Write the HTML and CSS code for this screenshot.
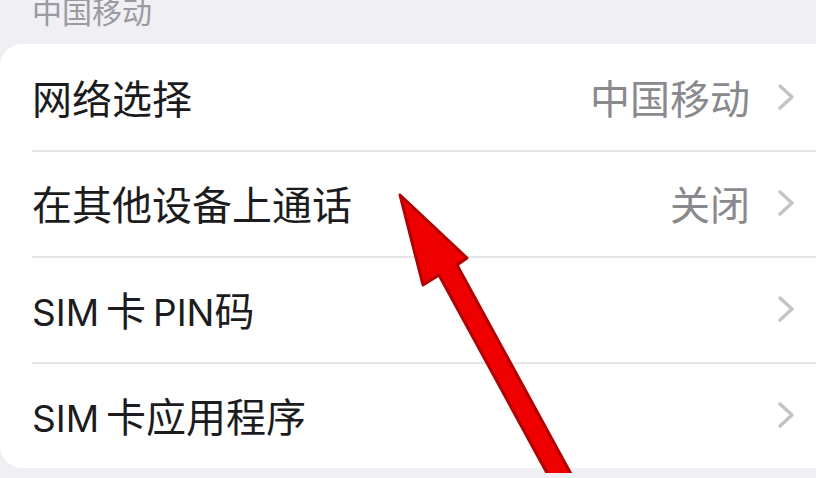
FILE: index.html
```html
<!DOCTYPE html>
<html lang="zh-CN">
<head>
<meta charset="utf-8">
<link rel="stylesheet" href="styles.css">
</head>
<body>
<div class="page">
  <div class="section-title">中国移动</div>
  <div class="card">
    <div class="row">
      <span class="label">网络选择</span>
      <span class="right"><span class="value">中国移动</span><svg class="chev" viewBox="0 0 18 28"><path d="M3 3 L15 14 L3 25" /></svg></span>
    </div>
    <div class="row">
      <span class="label">在其他设备上通话</span>
      <span class="right"><span class="value">关闭</span><svg class="chev" viewBox="0 0 18 28"><path d="M3 3 L15 14 L3 25" /></svg></span>
    </div>
    <div class="row">
      <span class="label"><span class="lat">SIM</span> 卡 <span class="lat">PIN</span>码</span>
      <span class="right"><svg class="chev" viewBox="0 0 18 28"><path d="M3 3 L15 14 L3 25" /></svg></span>
    </div>
    <div class="row">
      <span class="label"><span class="lat">SIM</span> 卡应用程序</span>
      <span class="right"><svg class="chev" viewBox="0 0 18 28"><path d="M3 3 L15 14 L3 25" /></svg></span>
    </div>
  </div>
  <svg class="arrow" viewBox="0 0 816 478" width="816" height="478">
    <polygon points="400,200 467,263 457,270 577,490 559,500 439,280 423,290" />
  </svg>
</div>
</body>
</html>
```

FILE: styles.css
```css
* { box-sizing: border-box; }
html, body {
  margin: 0;
  padding: 0;
  width: 816px;
  height: 478px;
  overflow: hidden;
  background: #efeff4;
}
.page {
  position: relative;
  width: 816px;
  height: 478px;
  font-family: "Noto Sans CJK SC", sans-serif;
}
.section-title {
  height: 49px;
  margin-top: -5px;
  padding-left: 32px;
  font-size: 30px;
  line-height: 30px;
  color: #9a9aa0;
}
.card {
  background: #ffffff;
  border-radius: 22px 0 0 22px;
  height: 424px;
  display: flex;
  flex-direction: column;
}
.row {
  height: 106px;
  display: flex;
  align-items: center;
  justify-content: space-between;
  padding-left: 32px;
  padding-right: 21px;
  position: relative;
}
.row + .row::before {
  content: "";
  position: absolute;
  left: 32px;
  right: 0;
  top: 0;
  height: 2px;
  background: #e6e6ea;
}
.label {
  font-size: 40px;
  color: #1c1c1e;
  word-spacing: -2px;
}
.lat {
  font-family: "Inter", "Noto Sans CJK SC", sans-serif;
  font-size: 37px;
}
.right {
  display: flex;
  align-items: center;
  gap: 27px;
}
.value {
  font-size: 40px;
  color: #8a8a8e;
}
.chev {
  width: 18px;
  height: 28px;
  fill: none;
  stroke: #c4c4c8;
  stroke-width: 3.5;
  stroke-linecap: round;
  stroke-linejoin: round;
}
.arrow {
  position: absolute;
  left: 0;
  top: 0;
  pointer-events: none;
}
.arrow polygon {
  fill: #ee0000;
  stroke: #b30000;
  stroke-width: 3;
  stroke-linejoin: round;
}
```
